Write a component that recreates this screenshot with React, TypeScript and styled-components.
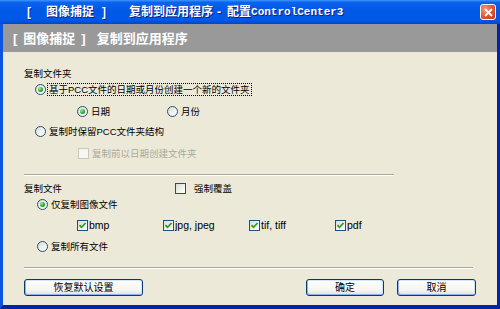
import styled, { createGlobalStyle } from 'styled-components';

const GlobalStyle = createGlobalStyle`
  html, body {
    margin: 0;
    padding: 0;
  }
  body {
    width: 500px;
    height: 309px;
    overflow: hidden;
    font-family: "Liberation Sans", "Noto Sans CJK SC", sans-serif;
  }
`;

const Window = styled.div`
  display: flex;
  flex-direction: column;
  width: 500px;
  height: 309px;
  background: #0831d9;
`;

const TitleBar = styled.div`
  display: flex;
  flex-shrink: 0;
  align-items: center;
  height: 24px;
  padding-left: 27px;
  padding-right: 4px;
  background: linear-gradient(
    180deg,
    #3d95ff 0%,
    #0a62ee 10%,
    #0058e6 45%,
    #0058e8 85%,
    #0045c8 100%
  );
  color: #fff;
  font-weight: 700;
  font-size: 12px;
  text-shadow: 1px 1px 0 #0a1e8a;
`;

const Seg = styled.span<{ $ml?: number; $mono?: boolean }>`
  margin-left: ${({ $ml }) => $ml ?? 0}px;
  white-space: pre;
  line-height: 1;
  ${({ $mono }) => $mono && `font-family: "Liberation Mono", monospace; font-size: 11px;`}
`;

const CloseButton = styled.div`
  display: flex;
  align-items: center;
  justify-content: center;
  width: 14px;
  height: 14px;
  margin-left: auto;
  border: 1px solid #fff;
  border-radius: 3px;
  background: radial-gradient(circle at 30% 30%, #f29a7c, #e0532b 55%, #c1381a);
`;

const Frame = styled.div`
  display: flex;
  flex: 1;
  flex-direction: column;
  border-left: 3px solid #0b55e0;
  border-right: 3px solid #0024a8;
  border-bottom: 4px solid #0024a8;
`;

const Header = styled.div`
  display: flex;
  flex-shrink: 0;
  align-items: center;
  height: 28px;
  padding-left: 10px;
  background: #999999;
  color: #fff;
  font-weight: 700;
  font-size: 13px;
`;

const Body = styled.div`
  display: flex;
  flex: 1;
  flex-direction: column;
  padding: 13px 21px 0;
  background: #ece9d8;
  font-size: 9.5px;
  color: #000;
`;

const Row = styled.div<{ $indent?: number; $gap?: number }>`
  display: flex;
  align-items: center;
  height: 16px;
  margin-left: ${({ $indent }) => $indent ?? 0}px;
  margin-top: ${({ $gap }) => $gap ?? 0}px;
`;

const Option = styled.div<{ $width?: number }>`
  display: flex;
  align-items: center;
  width: ${({ $width }) => ($width ? `${$width}px` : 'auto')};
  flex-shrink: 0;
`;

const GroupLabel = styled.span<{ $width?: number }>`
  width: ${({ $width }) => ($width ? `${$width}px` : 'auto')};
  flex-shrink: 0;
  white-space: nowrap;
`;

const Text = styled.span<{ $gap?: number; $focus?: boolean; $disabled?: boolean; $size?: number }>`
  margin-left: ${({ $gap }) => $gap ?? 2}px;
  padding: 0 1px;
  line-height: 11px;
  white-space: nowrap;
  font-size: ${({ $size }) => ($size ? `${$size}px` : 'inherit')};
  color: ${({ $disabled }) => ($disabled ? '#aca899' : '#000')};
  outline: ${({ $focus }) => ($focus ? '1px dotted #000' : 'none')};
`;

const RadioCircle = styled.span`
  display: flex;
  align-items: center;
  justify-content: center;
  box-sizing: border-box;
  width: 11px;
  height: 11px;
  border: 1px solid #1c5180;
  border-radius: 50%;
  background: linear-gradient(135deg, #dcdcd5 0%, #f3f3ef 60%, #ffffff 100%);
  flex-shrink: 0;
`;

const RadioDot = styled.span`
  width: 5px;
  height: 5px;
  border-radius: 50%;
  background: radial-gradient(circle at 35% 35%, #9af09a, #21a121 60%, #0f7a0f);
`;

const CheckBox = styled.span<{ $disabled?: boolean }>`
  display: flex;
  align-items: center;
  justify-content: center;
  box-sizing: border-box;
  width: 11px;
  height: 11px;
  flex-shrink: 0;
  border: 1px solid ${({ $disabled }) => ($disabled ? '#cac8bb' : '#1c5180')};
  background: ${({ $disabled }) =>
    $disabled ? '#f7f6f1' : 'linear-gradient(135deg, #dcdcd5 0%, #f3f3ef 60%, #ffffff 100%)'};
`;

const Separator = styled.div<{ $width: number; $gap: number }>`
  width: ${({ $width }) => $width}px;
  height: 0;
  margin-top: ${({ $gap }) => $gap}px;
  border-top: 1px solid #aca899;
  border-bottom: 1px solid #ffffff;
`;

const ButtonRow = styled.div`
  display: flex;
  justify-content: space-between;
  margin-top: 10px;
`;

const ButtonGroup = styled.div`
  display: flex;
  gap: 13px;
`;

const Button = styled.button<{ $width: number }>`
  box-sizing: border-box;
  width: ${({ $width }) => $width}px;
  height: 17px;
  padding: 0;
  border: 1px solid #003c74;
  border-radius: 3px;
  background: linear-gradient(180deg, #ffffff 0%, #f4f4f0 70%, #e3e1d8 100%);
  box-shadow: inset 1px -1px 0 #8cb4f2, inset -1px 1px 0 #cee7ff;
  font-family: "Liberation Sans", "Noto Sans CJK SC", sans-serif;
  font-size: 10px;
  line-height: 1;
  color: #000;
`;

function Radio({ checked }: { checked?: boolean }) {
  return <RadioCircle>{checked && <RadioDot />}</RadioCircle>;
}

function Check({ checked, disabled }: { checked?: boolean; disabled?: boolean }) {
  return (
    <CheckBox $disabled={disabled}>
      {checked && (
        <svg width="9" height="9" viewBox="0 0 9 9">
          <path d="M1.5 4.2 L3.5 6.3 L7.6 2" fill="none" stroke="#21a121" strokeWidth="1.8" />
        </svg>
      )}
    </CheckBox>
  );
}

const formats = ['bmp', 'jpg, jpeg', 'tif, tiff', 'pdf'];

export default function App() {
  return (
    <Window>
      <GlobalStyle />
      <TitleBar>
        <Seg>[</Seg>
        <Seg $ml={15}>图像捕捉</Seg>
        <Seg $ml={8}>]</Seg>
        <Seg $ml={23}>复制到应用程序</Seg>
        <Seg $ml={4}>-</Seg>
        <Seg $ml={6}>配置</Seg>
        <Seg $mono>ControlCenter3</Seg>
        <CloseButton>
          <svg width="9" height="9" viewBox="0 0 9 9">
            <path d="M1 1 L8 8 M8 1 L1 8" stroke="#fff" strokeWidth="1.8" />
          </svg>
        </CloseButton>
      </TitleBar>
      <Frame>
        <Header>
          <Seg>[</Seg>
          <Seg $ml={6}>图像捕捉</Seg>
          <Seg $ml={6}>]</Seg>
          <Seg $ml={11}>复制到应用程序</Seg>
        </Header>
        <Body>
          <Row>
            <GroupLabel>复制文件夹</GroupLabel>
          </Row>
          <Row $indent={11}>
            <Radio checked />
            <Text $focus>基于PCC文件的日期或月份创建一个新的文件夹</Text>
          </Row>
          <Row $indent={53} $gap={6}>
            <Option $width={90}>
              <Radio checked />
              <Text>日期</Text>
            </Option>
            <Option>
              <Radio />
              <Text>月份</Text>
            </Option>
          </Row>
          <Row $indent={11} $gap={4}>
            <Radio />
            <Text>复制时保留PCC文件夹结构</Text>
          </Row>
          <Row $indent={54} $gap={6}>
            <Check disabled />
            <Text $disabled>复制前以日期创建文件夹</Text>
          </Row>
          <Separator $width={370} $gap={13} />
          <Row $gap={4}>
            <GroupLabel $width={151}>复制文件</GroupLabel>
            <Check />
            <Text $gap={7}>强制覆盖</Text>
          </Row>
          <Row $indent={13}>
            <Radio checked />
            <Text>仅复制图像文件</Text>
          </Row>
          <Row $indent={53} $gap={5}>
            {formats.map((f) => (
              <Option key={f} $width={86}>
                <Check checked />
                <Text $gap={0} $size={10.5}>
                  {f}
                </Text>
              </Option>
            ))}
          </Row>
          <Row $indent={13} $gap={5}>
            <Radio />
            <Text>复制所有文件</Text>
          </Row>
          <Separator $width={449} $gap={13} />
          <ButtonRow>
            <Button $width={119}>恢复默认设置</Button>
            <ButtonGroup>
              <Button $width={78}>确定</Button>
              <Button $width={79}>取消</Button>
            </ButtonGroup>
          </ButtonRow>
        </Body>
      </Frame>
    </Window>
  );
}
